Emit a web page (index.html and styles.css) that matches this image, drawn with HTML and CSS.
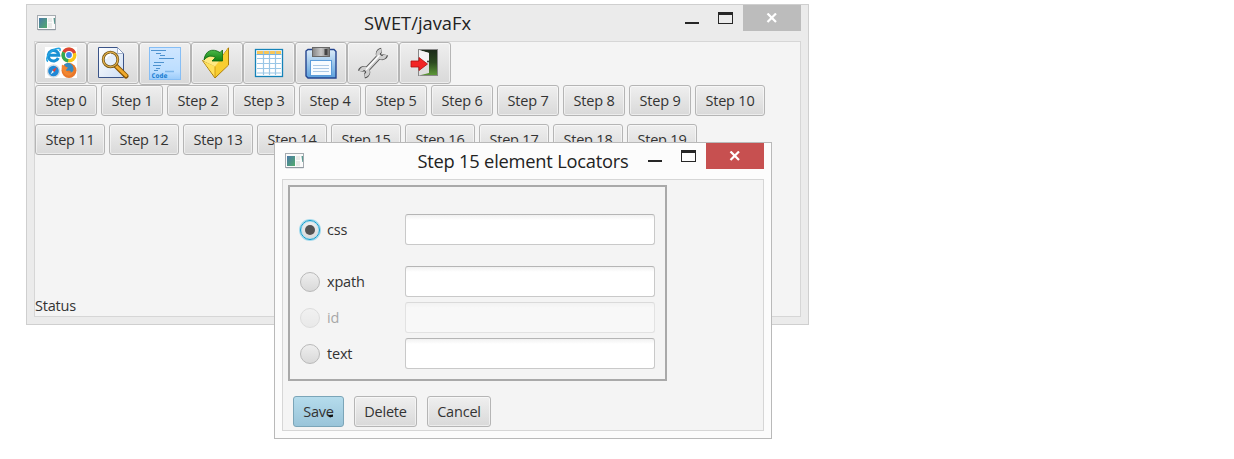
FILE: index.html
```html
<!DOCTYPE html>
<html lang="en">
<head>
<meta charset="utf-8">
<title>SWET/javaFx</title>
<link rel="stylesheet" href="styles.css">
</head>
<body>
<svg width="0" height="0" class="defs" aria-hidden="true">
  <defs>
    <linearGradient id="appg" x1="0" y1="0" x2="1" y2="1"><stop offset="0" stop-color="#4a78a8"/><stop offset="1" stop-color="#52ab6c"/></linearGradient>
    <linearGradient id="gold" x1="0" y1="0" x2="1" y2="1"><stop offset="0" stop-color="#fff29a"/><stop offset="1" stop-color="#f0b400"/></linearGradient>
    <linearGradient id="paper" x1="0" y1="0" x2="1" y2="1"><stop offset="0" stop-color="#fff"/><stop offset="1" stop-color="#cfdff4"/></linearGradient>
    <linearGradient id="codeg" x1="0" y1="0" x2="0" y2="1"><stop offset="0" stop-color="#cfe6ff"/><stop offset=".75" stop-color="#bcdeff"/><stop offset="1" stop-color="#9bcbfa"/></linearGradient>
    <linearGradient id="disk" x1="0" y1="0" x2="0" y2="1"><stop offset="0" stop-color="#dcecf9"/><stop offset="1" stop-color="#5ba0dc"/></linearGradient>
    <linearGradient id="metal" x1="0" y1="0" x2="1" y2="0"><stop offset="0" stop-color="#858585"/><stop offset=".5" stop-color="#c8c8c8"/><stop offset="1" stop-color="#777"/></linearGradient>
    <linearGradient id="grass" x1="0" y1="0" x2="0" y2="1"><stop offset="0" stop-color="#1c2a1a"/><stop offset=".5" stop-color="#2c4a20"/><stop offset="1" stop-color="#5e9a38"/></linearGradient>
    <linearGradient id="leaf" x1="0" y1="0" x2="0" y2="1"><stop offset="0" stop-color="#4cb848"/><stop offset="1" stop-color="#128012"/></linearGradient>
    <symbol id="app" viewBox="0 0 19 16">
      <rect x=".5" y=".5" width="18" height="14" fill="#fafafa" stroke="#a5abb0"/>
      <path d="M1 14.700h17.500" stroke="#8d969e"/>
      <rect x="2" y="3" width="8" height="10" fill="url(#appg)"/>
      <path d="M11 3h4v4h-4zM11 8h4v5h-4z" fill="#e8eae8"/>
      <path d="M16.500 3h1.500v6h-.7z" fill="#5a9a90"/>
    </symbol>
  </defs>
</svg>

<main class="window main-window">
  <header class="titlebar">
    <svg class="app-icon" width="19" height="16"><use href="#app"/></svg>
    <h1 class="title">SWET/javaFx</h1>
    <div class="controls"><span class="min"></span><span class="max"></span><span class="close"><svg width="12" height="10" viewBox="0 0 12 10"><path d="M1.500 .5l8.500 8.500M10 .5l-8.500 8.500" stroke="#fff" stroke-width="2.200"/></svg></span></div>
  </header>
  <section class="client">
    <nav class="toolbar">
      <button class="tool"><svg width="32" height="32" viewBox="0 0 32 32">
        <rect width="32" height="31" fill="#fff"/>
        <path d="M13.300 11A5.300 5.300 0 1 1 13.800 8.300H4" fill="none" stroke="#1990d4" stroke-width="3"/>
        <path d="M3 14.500C-1 12.500 5 2 14 1.300c1.500 0 1.300 1.500.8 2.700" fill="none" stroke="#24a5e3" stroke-width="1.500"/>
        <circle cx="24" cy="8" r="7.500" fill="#fbc716"/>
        <path d="M24 8L17.300 4.500A7.500 7.500 0 0 1 31 5.500z" fill="#dc4437"/>
        <path d="M24 8l-1 7.500A7.500 7.500 0 0 1 17.300 4.500z" fill="#35a853"/>
        <circle cx="24" cy="8" r="4" fill="#fff"/><circle cx="24" cy="8" r="2.900" fill="#4285e8"/>
        <circle cx="8.500" cy="24" r="6" fill="#1f88d6" stroke="#d5dde4" stroke-width="1.400"/>
        <path d="M12 20l-2.500 5-2-2z" fill="#ee3f35"/><path d="M5.500 27.500l2-4 1.500 1.500z" fill="#f4f4f4"/>
        <circle cx="24" cy="23.500" r="7.500" fill="#e9772a"/>
        <path d="M19 17.500c4-3 9-1.500 9.500 4 .2 4-2 6.500-5 5.500 3-1 3-3 .5-3.500l-3 .5c-2-1-1-3 1-3z" fill="#368ac0"/>
        <path d="M17 17.500l3 2.500 3 .5-2 2.500c2 4 6 3 8 0-1 5-5 7-8 5s-5-6-4-10.500z" fill="#f28731"/>
      </svg></button>
      <button class="tool"><svg width="32" height="32" viewBox="0 0 32 32">
        <path d="M1.500.5h19l6 6v24h-25z" fill="url(#paper)" stroke="#3b5488"/>
        <path d="M20.500.5v6h6z" fill="#fff" stroke="#8093b8" stroke-width=".7"/>
        <path d="M19 19l10 10" stroke="#855200" stroke-width="5" stroke-linecap="round"/>
        <path d="M19 19l10 9.500" stroke="#efa92c" stroke-width="3" stroke-linecap="round"/>
        <circle cx="13.500" cy="12.500" r="7.300" fill="#e5eefa" stroke="#6f5316" stroke-width="2.800"/>
        <circle cx="13.500" cy="12.500" r="7.300" fill="none" stroke="#e0ae4b" stroke-width="1.300"/>
        <path d="M9 12a5 5 0 0 1 5-4.500" stroke="#fff" stroke-width="2" fill="none"/>
      </svg></button>
      <button class="tool tall"><svg width="32" height="33" viewBox="0 0 32 33">
        <rect x=".5" y=".5" width="31" height="32" fill="url(#codeg)" stroke="#86bef5"/>
        <path d="M2 3.500h15M7 6.500h5M11 8.500h5M10 11.500h15M5 15.500h10M4 18.500h8M7 21.500h4M5 23.500h4" stroke="#4f93cf"/><path d="M16 24.500h9" stroke="#7eb7ea" stroke-width="1.500"/>
        <text x="2.500" y="30.500" class="code-label" textLength="16">Code</text>
      </svg></button>
      <button class="tool"><svg width="32" height="32" viewBox="0 0 32 32">
        <path d="M1.500 13.500L14 31 27.500 18V.8L14 19z" fill="url(#gold)" stroke="#a97b08" stroke-linejoin="round"/>
        <path d="M14 30V19L27 1.500V18z" fill="#f8cd30"/>
        <path d="M2.500 14.500L14 19.500V30z" fill="#ffe05a"/>
        <path d="M2.500 14l11.500 5.500L22 9V5H8z" fill="#ffe981"/>
        <path d="M14 19.500v10.500" stroke="#c48e08" stroke-width=".8"/>
        <path d="M3 13C4 4 11 .5 19 5.500l2.500-2.500v11H11l3.500-3.500C10 8 6.500 9 3 13z" fill="url(#leaf)" stroke="#0a650f" stroke-width=".8"/>
      </svg></button>
      <button class="tool"><svg width="32" height="32" viewBox="0 0 32 32">
        <rect x="2.500" y="2.500" width="27" height="27" fill="#fff" stroke="#1583b8" stroke-width="1.300"/>
        <path d="M4 4h24v3H4z" fill="#f9c656"/>
        <path d="M4 11.500h24M4 16.500h24M4 21.500h24M4 26h24M10.500 4v24M16.500 4v24M22.500 4v24" stroke="#9ac6e6" stroke-width="1.200"/>
        <path d="M3.500 7.500h25" stroke="#78b4e0"/>
      </svg></button>
      <button class="tool"><svg width="32" height="32" viewBox="0 0 32 32">
        <path d="M3 2.500h26l2 2v26.500H3l-2-2V4z" fill="url(#disk)" stroke="#24458f" stroke-width="1.400"/>
        <rect x="7.500" y=".5" width="17" height="9" fill="url(#metal)" stroke="#686868"/>
        <rect x="19.500" y="2" width="3" height="6" fill="#444"/>
        <rect x="5.500" y="13.500" width="21" height="15" fill="#f7fbff" stroke="#5b9cda"/>
        <path d="M8 18.500h16M8 21.500h16M8 24.500h16" stroke="#acc9e6"/>
      </svg></button>
      <button class="tool"><svg width="32" height="32" viewBox="0 0 32 32">
        <g fill="none" stroke="#505050" stroke-width="5.400"><path d="M9 23.500L23 8.500"/><path d="M24.500 3.300a3.600 3.600 0 1 0 4 4.500M7.500 28.800a3.600 3.600 0 1 0-4-4.500"/></g>
        <g fill="none" stroke="#cfcfcf" stroke-width="3.600"><path d="M8.500 24L23.500 8"/><path d="M24.300 3.600a3.600 3.600 0 1 0 3.800 4.200M7.700 28.500a3.600 3.600 0 1 0-3.800-4.200"/></g>
        <path d="M9 22.800L22.500 8.300" stroke="#fff" stroke-width="1.400"/>
      </svg></button>
      <button class="tool"><svg width="32" height="32" viewBox="0 0 32 32">
        <rect x="9.500" y="2.500" width="19" height="26" fill="url(#grass)" stroke="#888"/>
        <path d="M10 3l10 3v20l-10 2.500z" fill="#dedede"/><path d="M10 3l10 3v10l-10 4z" fill="#f4f4f4"/>
        <circle cx="19" cy="14.500" r="1" fill="#333"/>
        <path d="M2 14h8v-3.500l8.500 6.500-8.500 6.500V20H2z" fill="#f22525" stroke="#b00d0d" stroke-width=".8"/>
      </svg></button>
    </nav>
    <div class="steps">
      <button>Step 0</button><button>Step 1</button><button>Step 2</button><button>Step 3</button><button>Step 4</button><button>Step 5</button><button>Step 6</button><button>Step 7</button><button>Step 8</button><button>Step 9</button><button class="wide">Step 10</button>
      <button class="wide">Step 11</button><button class="wide">Step 12</button><button class="wide">Step 13</button><button class="wide">Step 14</button><button class="wide">Step 15</button><button class="wide">Step 16</button><button class="wide">Step 17</button><button class="wide">Step 18</button><button class="wide">Step 19</button>
    </div>
    <p class="status">Status</p>
  </section>
</main>

<section class="window dialog">
  <header class="titlebar">
    <svg class="app-icon" width="19" height="16"><use href="#app"/></svg>
    <h2 class="title">Step 15 element Locators</h2>
    <div class="controls"><span class="min"></span><span class="max"></span><span class="close"><svg width="12" height="10" viewBox="0 0 12 10"><path d="M1.500 .5l8.500 8.500M10 .5l-8.500 8.500" stroke="#fff" stroke-width="2.200"/></svg></span></div>
  </header>
  <div class="client">
    <div class="group">
      <div class="row first"><span class="radio selected"></span><label>css</label><span class="field"></span></div>
      <div class="row"><span class="radio"></span><label>xpath</label><span class="field"></span></div>
      <div class="row disabled"><span class="radio"></span><label>id</label><span class="field"></span></div>
      <div class="row"><span class="radio"></span><label>text</label><span class="field"></span></div>
    </div>
    <div class="actions">
      <button class="save">Save<svg class="cursor" width="7" height="4" viewBox="0 0 7 4"><path d="M0 0l2 1 4-.5v2L3 3.500z" fill="#111"/></svg></button>
      <button class="delete">Delete</button>
      <button class="cancel">Cancel</button>
    </div>
  </div>
</section>
</body>
</html>
```

FILE: styles.css
```css
* { box-sizing: border-box; }
body {
  margin: 0;
  height: 459px;
  position: relative;
  overflow: hidden;
  background: #fff;
  color: #333;
  font: 14.5px/20px "Open Sans", "Noto Sans", sans-serif;
  letter-spacing: -0.2px;
}
svg { display: block; flex: none; }
.defs { position: absolute; }

.window { position: absolute; display: flex; flex-direction: column; border: 1px solid; }
.main-window { left: 26px; top: 4px; width: 783px; height: 321px; padding: 0 7px 7px; background: #ebebeb; border-color: #cfcfcf; }
.dialog { left: 274px; top: 142px; width: 498px; height: 297px; padding: 0 7px 7px; background: #fcfcfc; border-color: #b9b9b9; }

.titlebar { height: 36px; flex: none; display: grid; grid-template-columns: 122px 1fr 122px; align-items: start; }
.app-icon { margin: 10px 0 0 3px; }
.title { margin: 5px 0 0; color: #222; font-size: 18.3px; line-height: 25px; font-weight: 400; text-align: center; white-space: nowrap; letter-spacing: -0.22px; }
.main-window .title { letter-spacing: 0; }
.controls { display: flex; justify-content: flex-end; }
.min { width: 14px; height: 2px; margin: 17px 19px 0 0; background: #262626; }
.max { width: 15px; height: 12px; margin: 7px 10px 0 0; border: 1px solid #262626; border-top-width: 3px; }
.close { width: 58px; height: 26px; display: flex; align-items: center; justify-content: center; background: #bcbcbc; }
.dialog .close { background: #c75050; }
.close svg { margin-right: 1px; }

.client { flex: 1; display: flex; flex-direction: column; background: #f4f4f4; border: 1px solid #d6d6d6; }

button {
  position: relative;
  display: flex;
  align-items: center;
  justify-content: center;
  height: 31px;
  padding: 0;
  border: 1px solid #b5b5b5;
  border-radius: 3px;
  background: linear-gradient(#efefef, #d9d9d9);
  box-shadow: inset 0 0 0 1px rgba(255, 255, 255, .5);
  color: #333;
  font: inherit;
  letter-spacing: inherit;
  white-space: nowrap;
}
.toolbar { display: flex; height: 43px; align-items: flex-start; }
.tool { width: 52px; height: 42px; }
.tall { height: 43px; }
.code-label { font: bold 6.5px "DejaVu Sans Mono", monospace; fill: #147bd1; letter-spacing: 0; }
.steps { display: flex; flex-wrap: wrap; gap: 8px 4px; }
.steps button { width: 62px; }
.steps .wide { width: 70px; }
.status { margin: auto 0 0; }

.group { width: 379px; height: 196px; margin: 5px 0 0 5px; padding: 27px 10px 0 10px; border: 2px solid #a9a9a9; }
.row { display: grid; grid-template-columns: 20px 85px 250px; align-items: center; height: 31px; margin-bottom: 5px; }
.row.first { margin-bottom: 21px; }
.row label { padding-left: 7px; }
.radio { width: 20px; height: 20px; margin-top: 1px; border: 1px solid #b9b9b9; border-radius: 50%; background: linear-gradient(#eee, #d9d9d9); display: grid; place-items: center; }
.selected { border-color: #099dcf; box-shadow: 0 0 0 1px #a4daed, inset 0 0 0 1px #b5dfee; }
.selected::after { content: ""; width: 10px; height: 10px; border-radius: 50%; background: #535353; }
.field { height: 31px; border: 1px solid #c9c9c9; border-top-color: #b5b5b5; border-radius: 3px; background: linear-gradient(#f1f1f1, #fff 5px); }
.disabled > * { opacity: .4; }

.actions { display: flex; gap: 10px; margin: 15px 0 0 10px; }
.save { width: 51px; border-color: #7ba5b8; background: linear-gradient(#b5dcec, #99c4d9); box-shadow: none; }
.delete { width: 63px; }
.cancel { width: 64px; }
.cursor { position: absolute; right: 9px; bottom: 8px; }
```
